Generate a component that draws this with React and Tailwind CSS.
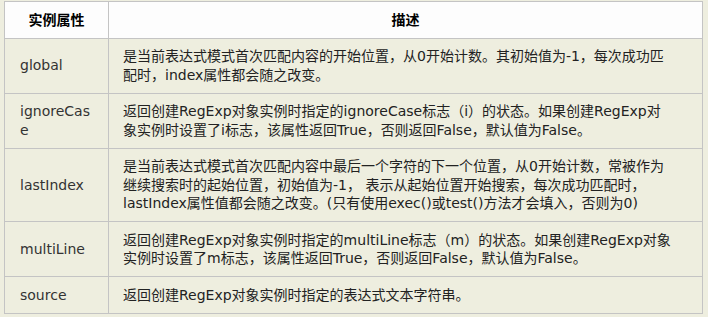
export default function App() {
  const rows = [
    {
      name: "global",
      desc: [
        "是当前表达式模式首次匹配内容的开始位置，从0开始计数。其初始值为-1，每次成功匹",
        "配时，index属性都会随之改变。",
      ],
    },
    {
      name: "ignoreCase",
      desc: [
        "返回创建RegExp对象实例时指定的ignoreCase标志（i）的状态。如果创建RegExp对",
        "象实例时设置了i标志，该属性返回True，否则返回False，默认值为False。",
      ],
    },
    {
      name: "lastIndex",
      desc: [
        "是当前表达式模式首次匹配内容中最后一个字符的下一个位置，从0开始计数，常被作为",
        "继续搜索时的起始位置，初始值为-1， 表示从起始位置开始搜索，每次成功匹配时，",
        "lastIndex属性值都会随之改变。(只有使用exec()或test()方法才会填入，否则为0)",
      ],
    },
    {
      name: "multiLine",
      desc: [
        "返回创建RegExp对象实例时指定的multiLine标志（m）的状态。如果创建RegExp对象",
        "实例时设置了m标志，该属性返回True，否则返回False，默认值为False。",
      ],
    },
    {
      name: "source",
      desc: ["返回创建RegExp对象实例时指定的表达式文本字符串。"],
    },
  ];
  return (
    <div
      className="w-[708px] h-[317px] bg-[#eeeedf] pl-[4px] pt-[1px] text-[14px] leading-[18.5px] text-[#222]"
      style={{ fontFamily: '"DejaVu Sans", "Noto Sans CJK SC", sans-serif' }}
    >
      <table className="w-[699px] border-collapse table-fixed border border-[#c4c4c4]">
        <colgroup>
          <col className="w-[104px]" />
          <col />
        </colgroup>
        <thead>
          <tr className="bg-[#fdfdfd]">
            <th className="border border-[#c4c4c4] px-[10px] py-[8.5px] text-center font-bold text-[14px] text-black">
              实例属性
            </th>
            <th className="border border-[#c4c4c4] px-[14px] py-[8.5px] text-center font-bold text-[14px] text-black">
              描述
            </th>
          </tr>
        </thead>
        <tbody>
          {rows.map((r) => (
            <tr key={r.name} className="bg-[#eeeedf]">
              <td className="border border-[#c4c4c4] pl-[15px] pr-[12px] py-[8.5px] align-middle break-all text-[#333]">
                {r.name}
              </td>
              <td className="border border-[#c4c4c4] pl-[14px] pr-[8px] py-[8.5px] align-middle text-[#222]">
                {r.desc.map((l, i) => (
                  <div key={i} className="whitespace-pre">
                    {l}
                  </div>
                ))}
              </td>
            </tr>
          ))}
        </tbody>
      </table>
    </div>
  );
}
